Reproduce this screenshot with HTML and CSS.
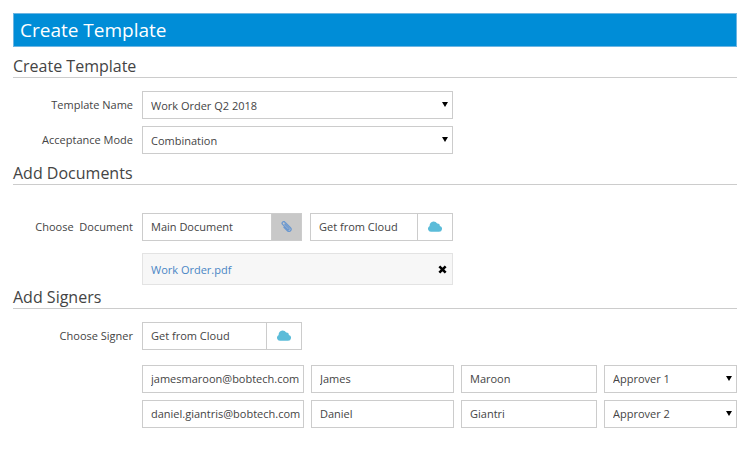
FILE: index.html
```html
<!DOCTYPE html>
<html lang="en">
<head>
    <meta charset="UTF-8">
    <meta name="viewport" content="width=device-width, initial-scale=1.0">
    <title>Create Template</title>
    <link rel="stylesheet" href="styles.css">
</head>
<body>
    <svg class="sprite" aria-hidden="true">
        <symbol id="cloud" viewBox="0 0 14 11">
            <path d="M3.1 10.8A3 3 0 0 1 1.7 5.1A4 4 0 0 1 5.4 .4A4.2 4.2 0 0 1 9.2 2.5A2.2 2.2 0 0 1 11.8 4.9A3 3 0 0 1 11 10.8Z" fill="#5bbcd9"/>
        </symbol>
        <symbol id="clip" viewBox="0 0 12 12">
            <path d="M4.2 3.6L8.6 8A.9 .9 0 0 1 7.3 9.3L1.7 3.7A1.7 1.7 0 0 1 4.3 1.3L10.3 7.4A2.3 2.3 0 0 1 7 10.7L3.2 6.9" fill="none" stroke="#6b98d0" stroke-width="1.4" stroke-linecap="round"/>
        </symbol>
    </svg>

    <form class="template-form">
        <h1 class="banner">Create Template</h1>

        <section class="details">
            <h2>Create Template</h2>
            <div class="row">
                <label for="templateName">Template Name</label>
                <div class="select">
                    <select id="templateName">
                        <option>Work Order Q2 2018</option>
                    </select>
                </div>
            </div>
            <div class="row">
                <label for="acceptanceMode">Acceptance Mode</label>
                <div class="select">
                    <select id="acceptanceMode">
                        <option>Combination</option>
                    </select>
                </div>
            </div>
        </section>

        <section class="documents">
            <h2>Add Documents</h2>
            <div class="row">
                <label for="mainDocument">Choose&nbsp; Document</label>
                <div class="pickers">
                    <div class="group attach">
                        <input type="text" id="mainDocument" value="Main Document">
                        <button type="button" class="addon" aria-label="Attach file">
                            <svg class="clip"><use href="#clip"/></svg>
                        </button>
                    </div>
                    <div class="group">
                        <input type="text" value="Get from Cloud" aria-label="Document from cloud">
                        <button type="button" class="addon" aria-label="Browse cloud documents">
                            <svg class="cloud"><use href="#cloud"/></svg>
                        </button>
                    </div>
                </div>
            </div>
            <div class="row">
                <div class="file">
                    <a href="#">Work Order.pdf</a>
                    <button type="button" class="remove" aria-label="Remove file">
                        <svg viewBox="0 0 8 8"><path d="M1.2 1.2L6.8 6.8M6.8 1.2L1.2 6.8" stroke="#000" stroke-width="2.3"/></svg>
                    </button>
                </div>
            </div>
        </section>

        <section class="signers">
            <h2>Add Signers</h2>
            <div class="row">
                <label for="signer">Choose Signer</label>
                <div class="pickers">
                    <div class="group">
                        <input type="text" id="signer" value="Get from Cloud">
                        <button type="button" class="addon" aria-label="Browse cloud signers">
                            <svg class="cloud"><use href="#cloud"/></svg>
                        </button>
                    </div>
                </div>
            </div>
            <div class="signer-list">
                <input type="email" value="jamesmaroon@bobtech.com" aria-label="Email">
                <input type="text" value="James" aria-label="First name">
                <input type="text" value="Maroon" aria-label="Last name">
                <div class="select">
                    <select aria-label="Role">
                        <option>Approver 1</option>
                    </select>
                </div>
                <input type="email" value="daniel.giantris@bobtech.com" aria-label="Email">
                <input type="text" value="Daniel" aria-label="First name">
                <input type="text" value="Giantri" aria-label="Last name">
                <div class="select">
                    <select aria-label="Role">
                        <option>Approver 2</option>
                    </select>
                </div>
            </div>
        </section>
    </form>
</body>
</html>
```
FILE: styles.css
```css
* {
    box-sizing: border-box;
}

body {
    margin: 0;
    padding: 13px;
    background: #fff;
    color: #444;
    font-family: "Open Sans", "Noto Sans", sans-serif;
    font-size: 11px;
}

.sprite {
    display: none;
}

.banner {
    margin: 0;
    padding: 0 6px;
    border: 1px solid #6db5e2;
    background: #008dd7;
    color: #fff;
    font-size: 19px;
    font-weight: 400;
    line-height: 32px;
}

h2 {
    margin: 0;
    padding-top: 2px;
    border-bottom: 1px solid #ccc;
    color: #444;
    font-size: 16px;
    font-weight: 400;
    line-height: 21px;
}

.row {
    display: grid;
    grid-template-columns: 120px 311fr 275fr;
    column-gap: 9px;
    align-items: center;
    margin-bottom: 7px;
}

.row label {
    padding-bottom: 2px;
    text-align: right;
}

input,
select {
    display: block;
    width: 100%;
    min-width: 0;
    height: 28px;
    margin: 0;
    padding: 0 2px 2px 8px;
    border: 1px solid #ccc;
    border-radius: 0;
    background: #fff;
    color: #444;
    font: inherit;
}

select {
    appearance: none;
}

.details select {
    padding-bottom: 0;
}

.select {
    position: relative;
}

/* drop-down arrow */
.select::after {
    content: "";
    position: absolute;
    top: 11px;
    right: 5px;
    border: 3px solid transparent;
    border-top: 5px solid #000;
    border-bottom: 0;
    pointer-events: none;
}

button {
    padding: 0;
    border: 0;
    background: none;
    cursor: pointer;
}

.details h2 {
    padding-top: 9px;
    margin-bottom: 13px;
}

.documents h2 {
    margin-bottom: 28px;
}

.signers h2 {
    margin-bottom: 13px;
}

.documents .row {
    margin-bottom: 12px;
}

.documents .row:last-child {
    margin-bottom: 0;
}

.pickers {
    display: grid;
    grid-template-columns: 160fr 143fr;
    gap: 8px;
}

.group {
    display: flex;
}

.group input {
    flex: 1;
}

.addon {
    display: flex;
    align-items: center;
    justify-content: center;
    width: 35px;
    padding-bottom: 2px;
    border: 1px solid #ccc;
    border-left: 0;
}

.attach .addon {
    width: 30px;
    background: #c8c8c8;
}

.cloud {
    width: 14px;
    height: 11px;
}

.clip {
    width: 11px;
    height: 11px;
}

.file {
    grid-column: 2;
    display: flex;
    align-items: center;
    justify-content: space-between;
    height: 32px;
    padding: 0 5px 0 8px;
    border: 1px solid #e3e3e3;
    background: #f7f7f7;
}

.file a {
    color: #4a86c5;
    text-decoration: none;
}

.remove svg {
    display: block;
    width: 9px;
    height: 9px;
}

.signers .row {
    margin-bottom: 15px;
}

.signer-list {
    display: grid;
    grid-template-columns: 162fr 143fr 136fr 133fr;
    gap: 7px;
    margin-left: 129px;
}
```
